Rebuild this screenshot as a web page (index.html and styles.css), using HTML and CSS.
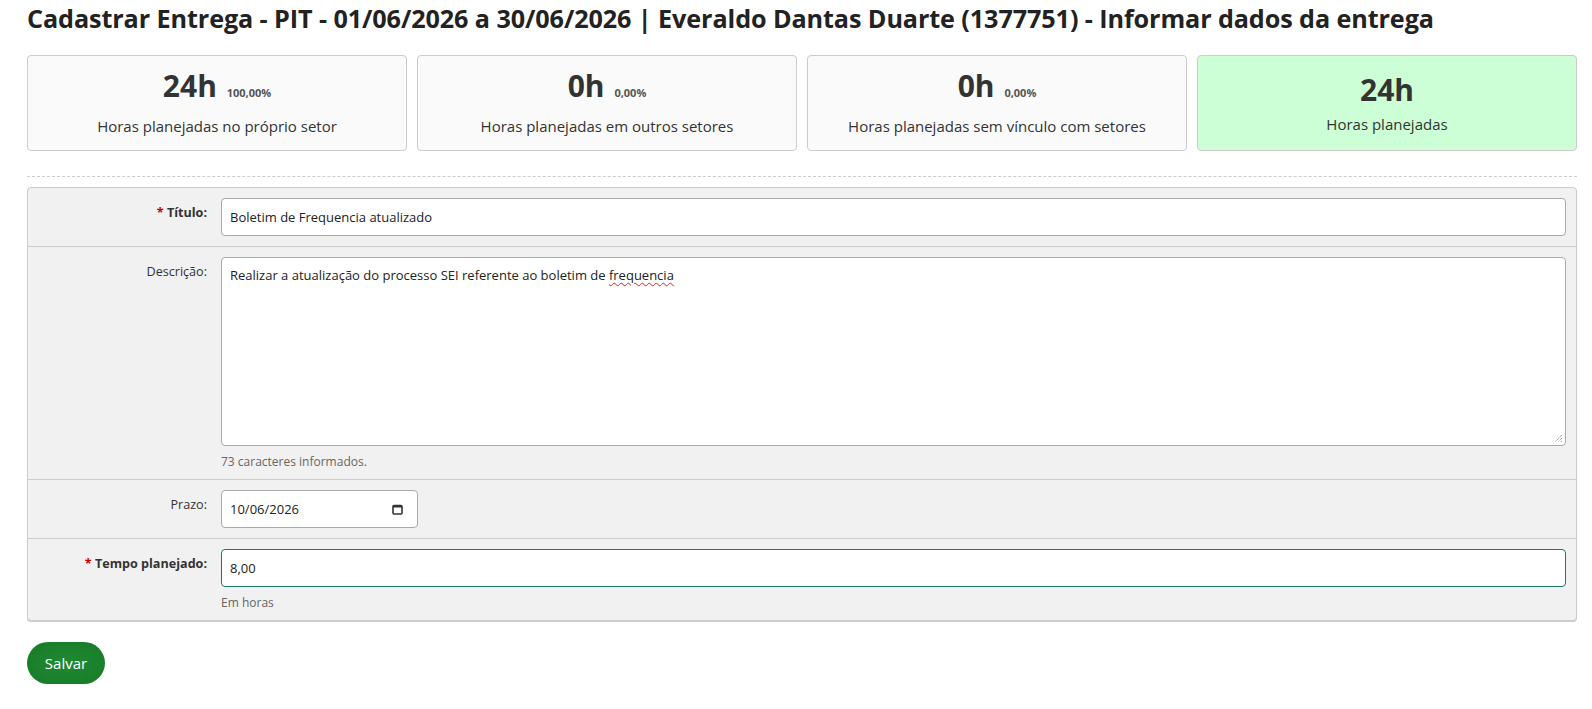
FILE: index.html
```html
<!DOCTYPE html>
<html lang="pt-BR">
<head>
    <meta charset="UTF-8">
    <title>Cadastrar Entrega</title>
    <link rel="stylesheet" href="styles.css">
</head>
<body>
    <h1 class="page-title">Cadastrar Entrega - PIT - 01/06/2026 a 30/06/2026 | Everaldo Dantas Duarte (1377751) - Informar dados da entrega</h1>

    <div class="cards">
        <div class="card">
            <div class="card-value">24h <small>100,00%</small></div>
            <div class="card-label">Horas planejadas no próprio setor</div>
        </div>
        <div class="card">
            <div class="card-value">0h <small>0,00%</small></div>
            <div class="card-label">Horas planejadas em outros setores</div>
        </div>
        <div class="card">
            <div class="card-value">0h <small>0,00%</small></div>
            <div class="card-label">Horas planejadas sem vínculo com setores</div>
        </div>
        <div class="card card-total">
            <div class="card-value">24h</div>
            <div class="card-label">Horas planejadas</div>
        </div>
    </div>

    <hr class="divider">

    <form class="form-panel">
        <div class="form-row">
            <label class="form-label required" for="titulo"><span class="star">*</span> Título:</label>
            <div class="form-field">
                <input type="text" id="titulo" class="input" value="Boletim de Frequencia atualizado">
            </div>
        </div>
        <div class="form-row">
            <label class="form-label">Descrição:</label>
            <div class="form-field">
                <div class="input textarea">Realizar a atualização do processo SEI referente ao boletim de <span class="spell">frequencia</span>
                    <svg class="grip" width="9" height="9" viewBox="0 0 9 9"><path d="M8 1 L1 8 M8 4 L4 8 M8 7 L7 8" stroke="#777" stroke-width="1" stroke-dasharray="1 1"/></svg>
                </div>
                <div class="help">73 caracteres informados.</div>
            </div>
        </div>
        <div class="form-row">
            <label class="form-label">Prazo:</label>
            <div class="form-field">
                <div class="input date-input">
                    <span>10/06/2026</span>
                    <svg width="11" height="11" viewBox="0 0 11 11"><rect x="1" y="1.5" width="9" height="8.5" rx="1" fill="none" stroke="#333" stroke-width="1.6"/><rect x="1" y="1" width="9" height="2.5" fill="#333"/></svg>
                </div>
            </div>
        </div>
        <div class="form-row">
            <label class="form-label required" for="tempo"><span class="star">*</span> Tempo planejado:</label>
            <div class="form-field">
                <input type="text" id="tempo" class="input input-focus" value="8,00">
                <div class="help">Em horas</div>
            </div>
        </div>
    </form>

    <button class="btn-save" type="button">Salvar</button>
</body>
</html>
```

FILE: styles.css
```css
body {
    font-family: 'Open Sans', sans-serif;
    color: #333;
    background: #fff;
    margin: 0;
    padding: 0 15px 0 27px;
}
.page-title {
    font-size: 25.2px;
    font-weight: 700;
    color: #222;
    margin: 0;
    padding-top: 1px;
    line-height: 34px;
    letter-spacing: -0.1px;
}
.cards {
    display: grid;
    grid-template-columns: repeat(4, 1fr);
    gap: 10px;
    margin-top: 20px;
}
.card {
    background: #fafafa;
    border: 1px solid #ccc;
    border-radius: 4px;
    height: 96px;
    text-align: center;
    box-sizing: border-box;
    padding-top: 10px;
}
.card-total {
    background: #ccffd5;
    padding-top: 14px;
}
.card-value {
    font-size: 30px;
    font-weight: 700;
    color: #333;
    line-height: 40px;
}
.card-value small {
    font-size: 11px;
    color: #555;
    font-weight: 700;
    margin-left: 2px;
}
.card-label {
    font-size: 15px;
    color: #333;
    margin-top: 3px;
}
.card-total .card-label {
    margin-top: 4px;
}
.divider {
    border: none;
    border-top: 1px dashed #ccc;
    margin: 25px 0 10px;
}
.form-panel {
    background: #f1f1f1;
    border: 1px solid #ccc;
    border-radius: 4px;
    box-shadow: 0 1px 0 #ccc;
}
.form-row {
    display: flex;
    border-top: 1px solid #ccc;
    padding: 10px 10px 10px 0;
}
.form-row:first-child {
    border-top: none;
}
.form-label {
    width: 179px;
    flex: none;
    text-align: right;
    font-size: 12.6px;
    padding-top: 6px;
    margin-right: 14px;
}
.form-label.required {
    font-weight: 700;
}
.star {
    color: #c00;
}
.form-field {
    flex: 1;
}
.input {
    display: block;
    box-sizing: border-box;
    width: 100%;
    height: 38px;
    border: 1px solid #aaa;
    border-radius: 4px;
    background: #fff;
    font-family: 'Open Sans', sans-serif;
    font-size: 13px;
    color: #222;
    padding: 0 8px;
    margin: 0;
}
.textarea {
    position: relative;
    height: 189px;
    padding: 7px 8px;
    line-height: 20px;
}
.spell {
    text-decoration: underline wavy #e02020;
    text-decoration-thickness: 1px;
    text-underline-offset: 2px;
}
.grip {
    position: absolute;
    right: 2px;
    bottom: 2px;
}
.date-input {
    width: 197px;
    display: flex;
    align-items: center;
    justify-content: space-between;
    padding: 0 14px 0 8px;
}
.input-focus {
    border-color: #1a7a68;
    outline: none;
}
.help {
    font-size: 12px;
    color: #666;
    margin-top: 8px;
    line-height: 15px;
}
.btn-save {
    margin-top: 21px;
    width: 78px;
    height: 42px;
    border: none;
    border-radius: 21px;
    background: radial-gradient(ellipse at center, #1f8a32 0%, #177a28 100%);
    color: #fff;
    font-family: 'Open Sans', sans-serif;
    font-size: 15px;
    cursor: pointer;
}
```
